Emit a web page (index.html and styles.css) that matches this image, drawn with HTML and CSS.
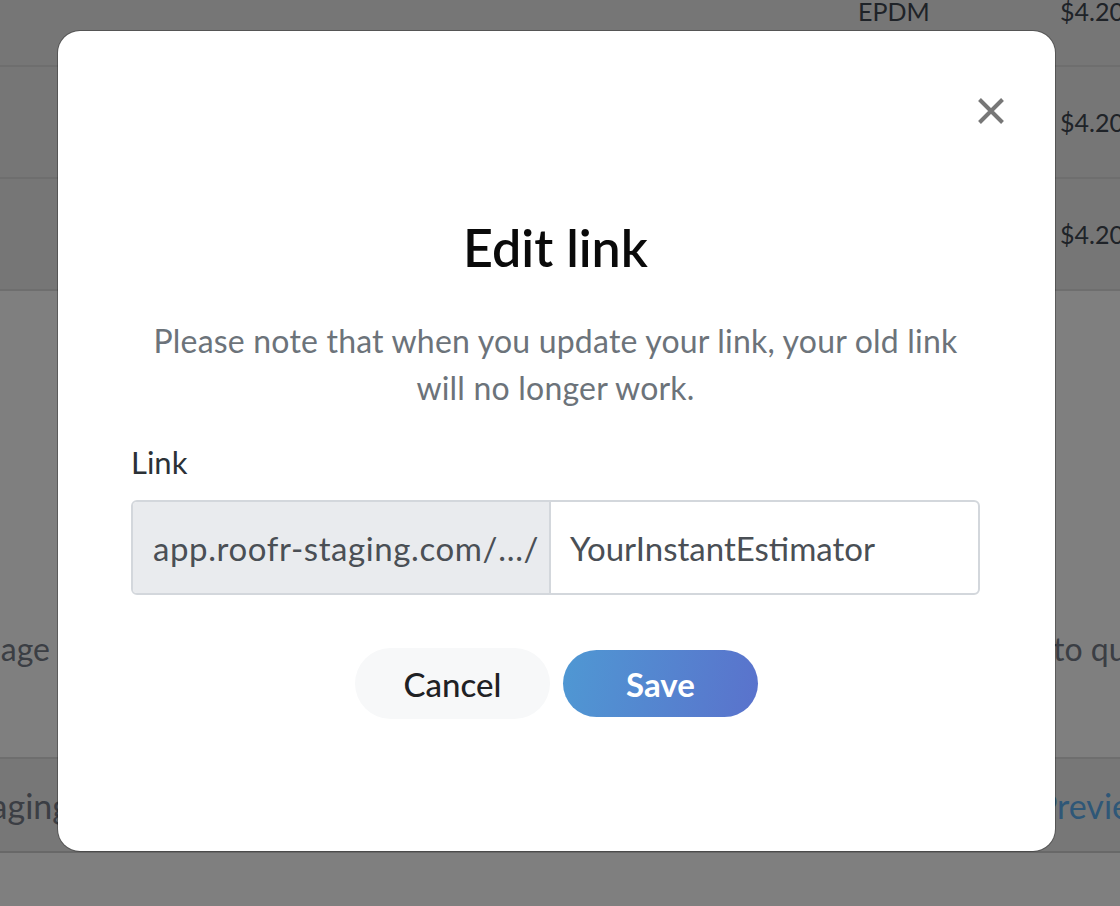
FILE: index.html
```html
<!DOCTYPE html>
<html>
<head>
<meta charset="utf-8">
<link rel="stylesheet" href="styles.css">
</head>
<body>
<div class="page">
  <div class="table">
    <div class="row row-first">
      <span class="cell cell-type">EPDM</span>
      <span class="cell cell-price">$4.20</span>
    </div>
    <div class="row">
      <span class="cell cell-type"></span>
      <span class="cell cell-price">$4.20</span>
    </div>
    <div class="row">
      <span class="cell cell-type"></span>
      <span class="cell cell-price">$4.20</span>
    </div>
  </div>
  <div class="section">
    <div class="section-line">
      <div class="clip-left"><span>Choose a landing page</span></div>
      <span class="right-text">to quickly</span>
    </div>
  </div>
  <div class="band">
    <div class="clip-left"><span>app.roofr-staging</span></div>
    <span class="preview">Preview</span>
  </div>
</div>

<div class="overlay">
  <div class="modal">
    <button class="close" aria-label="Close">
      <svg width="28" height="28" viewBox="0 0 28 28">
        <path d="M2.5 2.5 L25.5 25.5 M25.5 2.5 L2.5 25.5" stroke="#777777" stroke-width="4" stroke-linecap="butt" fill="none"/>
      </svg>
    </button>
    <h1 class="title">Edit link</h1>
    <p class="note">Please note that when you update your link, your old link will no longer work.</p>
    <label class="label">Link</label>
    <div class="input-group">
      <div class="addon">app.roofr-staging.com/…/</div>
      <div class="field">YourInstantEstimator</div>
    </div>
    <div class="actions">
      <button class="btn btn-cancel">Cancel</button>
      <button class="btn btn-save">Save</button>
    </div>
  </div>
</div>
</body>
</html>
```

FILE: styles.css
```css
* { box-sizing: border-box; }
html, body { margin: 0; padding: 0; }
body {
  width: 1120px;
  height: 906px;
  overflow: hidden;
  background: #ffffff;
  font-family: Lato, "Noto Sans", sans-serif;
  position: relative;
}

.page { width: 1120px; }

.table { background: #ececec; }
.row {
  height: 112px;
  display: flex;
  align-items: center;
  border-bottom: 2px solid #dcdcdc;
  font-size: 25px;
  color: #3e4650;
}
.row-first {
  height: 67px;
  align-items: flex-start;
}
.row-first .cell { line-height: 22px; }
.cell { flex-shrink: 0; }
.cell-type { margin-left: 858px; width: 202px; }
.cell-price { white-space: nowrap; }

.section { height: 466px; display: flex; flex-direction: column; justify-content: flex-end; }
.section-line {
  display: flex;
  justify-content: space-between;
  align-items: center;
  height: 40px;
  margin-bottom: 89px;
  font-size: 32px;
  color: #767c88;
}
.clip-left {
  width: 50px;
  overflow: hidden;
  display: flex;
  justify-content: flex-end;
  white-space: nowrap;
}
.right-text { width: 67px; white-space: nowrap; overflow: hidden; }

.band {
  height: 96px;
  background: #eeeeee;
  border-top: 2px solid #dcdcdc;
  border-bottom: 2px solid #d0d0d0;
  display: flex;
  justify-content: space-between;
  align-items: center;
  font-size: 34px;
  color: #767c88;
}
.band .clip-left { width: 70px; }
.preview { color: #5eaeee; width: 83px; overflow: hidden; white-space: nowrap; }

.overlay {
  position: absolute;
  inset: 0;
  background: rgba(0, 0, 0, 0.5);
  padding: 31px 0 0 58px;
}

.modal {
  position: relative;
  width: 997px;
  height: 820px;
  background: #ffffff;
  border-radius: 22px;
  box-shadow: 0 0 0 1px rgba(0, 0, 0, 0.28);
  padding: 186px 75px 0 73px;
  display: flex;
  flex-direction: column;
}

.close {
  position: absolute;
  top: 66px;
  right: 50px;
  width: 28px;
  height: 28px;
  padding: 0;
  border: 0;
  background: none;
  display: flex;
}

.title {
  margin: 0;
  text-align: center;
  font-size: 52px;
  font-weight: 600;
  color: #0a0a0a;
  line-height: 60px;
}

.note {
  margin: 40px 0 0;
  text-align: center;
  font-size: 32px;
  letter-spacing: 0.2px;
  line-height: 47px;
  color: #6c737a;
  padding: 0 15px;
}

.label {
  margin-top: 33px;
  font-size: 31px;
  line-height: 36px;
  color: #2b3136;
}

.input-group {
  margin-top: 20px;
  display: flex;
  height: 95px;
  border: 2px solid #d3d7dc;
  border-radius: 6px;
  overflow: hidden;
  font-size: 33px;
  color: #4a4f55;
}
.addon {
  width: 418px;
  background: #e9ebee;
  border-right: 2px solid #d3d7dc;
  display: flex;
  align-items: center;
  padding-left: 20px;
  white-space: nowrap;
  letter-spacing: 0.6px;
}
.field {
  flex: 1;
  display: flex;
  align-items: center;
  padding-left: 19px;
}

.actions {
  margin-top: 53px;
  display: flex;
  justify-content: center;
  align-items: center;
  gap: 13px;
  padding-left: 2px;
}
.btn {
  font-family: inherit;
  font-size: 33px;
  border: 0;
  border-radius: 40px;
  width: 195px;
  cursor: pointer;
}
.btn-cancel {
  height: 71px;
  background: #f7f8f9;
  color: #1f2124;
  font-weight: 500;
}
.btn-save {
  height: 67px;
  background: linear-gradient(100deg, #4f98d3 0%, #5a72cc 100%);
  color: #ffffff;
  font-weight: 700;
}
```
